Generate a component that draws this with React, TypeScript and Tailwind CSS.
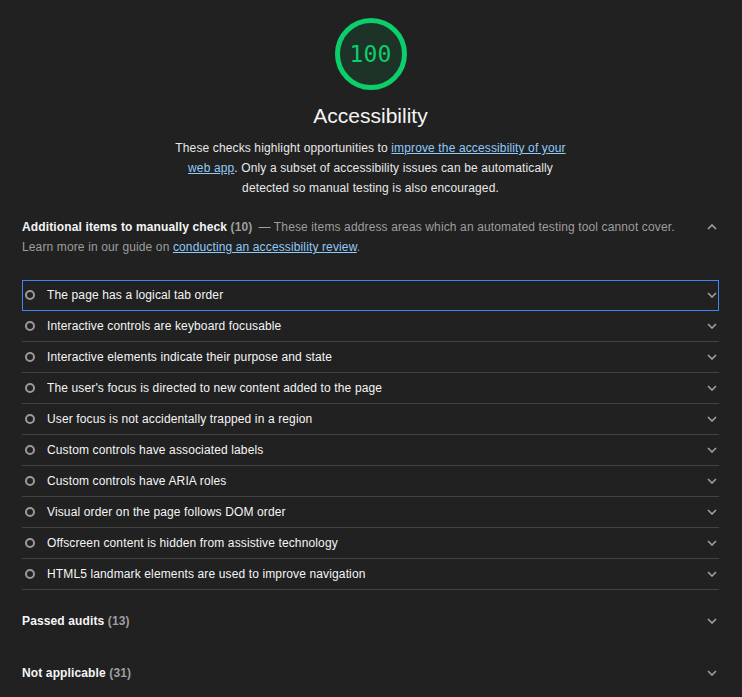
import React from "react"

const manualItems = [
  "The page has a logical tab order",
  "Interactive controls are keyboard focusable",
  "Interactive elements indicate their purpose and state",
  "The user's focus is directed to new content added to the page",
  "User focus is not accidentally trapped in a region",
  "Custom controls have associated labels",
  "Custom controls have ARIA roles",
  "Visual order on the page follows DOM order",
  "Offscreen content is hidden from assistive technology",
  "HTML5 landmark elements are used to improve navigation",
]

// petit chevron gris (haut ou bas)
function Chevron({ up = false }: { up?: boolean }) {
  return (
    <svg width="10" height="6" viewBox="0 0 10 6" className="shrink-0">
      <polyline
        points={up ? "1,5 5,1 9,5" : "1,1 5,5 9,1"}
        fill="none"
        stroke="#a0a0a0"
        strokeWidth="1.6"
      />
    </svg>
  )
}

function Gauge({ score }: { score: number }) {
  return (
    <div className="relative w-[72px] h-[72px]">
      <svg width="72" height="72" viewBox="0 0 72 72" className="absolute inset-0">
        <circle cx="36" cy="36" r="33.5" fill="#1e3328" stroke="#0cce6b" strokeWidth="5" />
      </svg>
      <div className="absolute inset-0 flex items-center justify-center text-[#0cce6b] text-[23px] font-['DejaVu_Sans_Mono',monospace]">
        {score}
      </div>
    </div>
  )
}

export default function App() {
  return (
    <div className="min-h-[697px] bg-[#212121] text-[#f5f5f5] font-['Liberation_Sans',Arial,sans-serif] text-[12px] tracking-[0.13px] pl-[22px] pr-[23px]">
      {/* En-tête de la catégorie */}
      <div className="flex flex-col items-center pt-[18px]">
        <Gauge score={100} />
        <h1 className="mt-[14px] text-[21px] leading-[24px] font-normal tracking-normal">Accessibility</h1>
        <p className="mt-[10px] max-w-[400px] text-center leading-[20px] text-[#e8e8e8]">
          These checks highlight opportunities to{" "}
          <a className="text-[#90caf9] underline">improve the accessibility of your web app</a>. Only a subset of
          accessibility issues can be automatically detected so manual testing is also encouraged.
        </p>
      </div>

      {/* Groupe manuel */}
      <div className="mt-[19px] flex items-start justify-between">
        <div className="w-[668px] leading-[20px] text-[#9e9e9e]">
          <span className="font-bold text-[#f5f5f5]">Additional items to manually check</span>{" "}
          <span className="font-bold">(10)</span>
          <span className="ml-[6px]">— These items address areas which an automated testing tool cannot cover. Learn more in our guide on </span>
          <a className="text-[#90caf9] underline">conducting an accessibility review</a>.
        </div>
        <div className="h-[20px] flex items-center mr-[2px]">
          <Chevron up />
        </div>
      </div>

      <div className="mt-[23px]">
        {manualItems.map((item, i) => (
          <div
            key={item}
            className={
              i === 0
                ? "flex items-center h-[31px] border-b border-[#424242] outline outline-1 -outline-offset-1 outline-[#4285f4] pl-[3px] pr-[2px]"
                : "flex items-center h-[31px] border-b border-[#424242] pl-[3px] pr-[2px]"
            }
          >
            <span className="w-[10px] h-[10px] rounded-full border-2 border-[#9a9a9a] shrink-0" />
            <span className="ml-[12px] flex-1">{item}</span>
            <Chevron />
          </div>
        ))}
      </div>

      {/* Groupes repliés */}
      <div className="mt-[5px]">
        <div className="flex items-center justify-between h-[52px] pr-[2px]">
          <div className="font-bold">
            Passed audits <span className="text-[#9e9e9e]">(13)</span>
          </div>
          <Chevron />
        </div>
        <div className="flex items-center justify-between h-[52px] pr-[2px]">
          <div className="font-bold">
            Not applicable <span className="text-[#9e9e9e]">(31)</span>
          </div>
          <Chevron />
        </div>
      </div>
    </div>
  )
}
